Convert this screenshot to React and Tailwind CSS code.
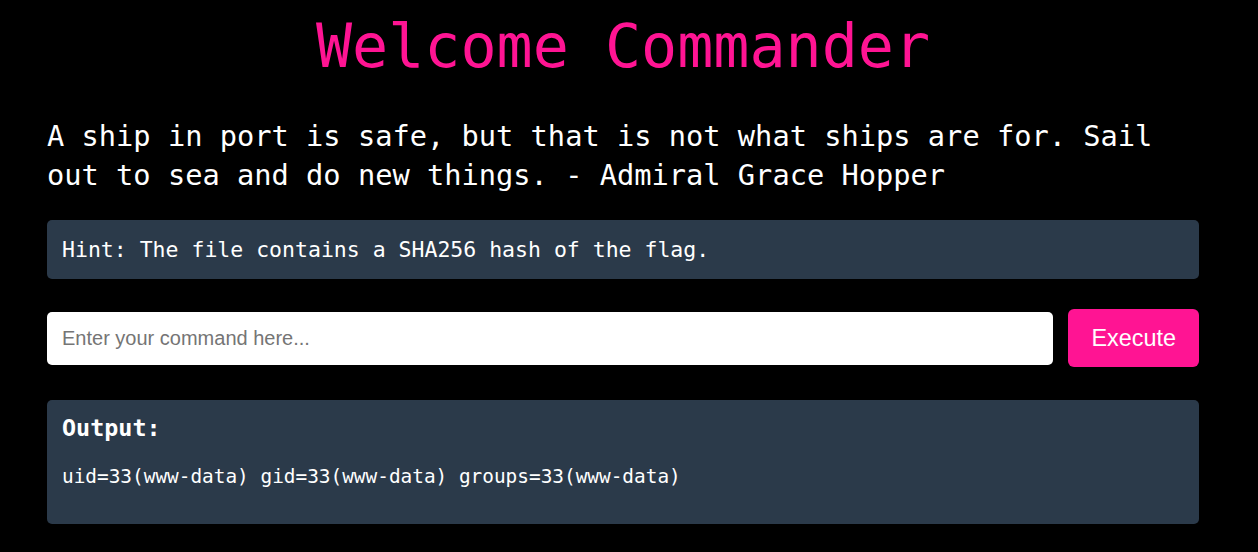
export default function App() {
  const mono = "font-['DejaVu_Sans_Mono',monospace]";
  const sans = "font-['Liberation_Sans',Arial,sans-serif]";

  return (
    <div className={`min-h-screen bg-black text-white ${mono}`}>
      <div className="ml-[47px] w-[1152px] pt-[1px] pb-[29px]">
        <h1 className="text-center text-[60px] leading-[90px] text-[#ff1493]">
          Welcome Commander
        </h1>

        <p className="mt-[26px] text-[28.7px] leading-[39px]">
          A ship in port is safe, but that is not what ships are for. Sail out to sea and do new things. - Admiral Grace Hopper
        </p>

        <div className="mt-[25px] rounded-[5px] bg-[#2b3a4a] px-[15px] py-[17px] text-[21.5px] leading-[25px]">
          Hint: The file contains a SHA256 hash of the flag.
        </div>

        <div className="mt-[30px] flex items-center gap-[15px]">
          <input
            type="text"
            placeholder="Enter your command here..."
            className={`min-w-0 flex-1 rounded-[5px] bg-white px-[15px] py-[15px] text-[20px] leading-[23px] text-black outline-none placeholder:text-[#757575] ${sans}`}
          />
          <button
            className={`h-[58px] rounded-[6px] bg-[#ff1493] px-[23px] text-[23.4px] leading-[27px] text-white ${sans}`}
          >
            Execute
          </button>
        </div>

        <div className="mt-[33px] rounded-[5px] bg-[#2b3a4a] px-[15px] pt-[15px] pb-[36px]">
          <h3 className="text-[23.4px] font-bold leading-[27px]">Output:</h3>
          <pre className={`mt-[23px] text-[19.4px] leading-[23px] ${mono}`}>
            uid=33(www-data) gid=33(www-data) groups=33(www-data)
          </pre>
        </div>
      </div>
    </div>
  );
}
